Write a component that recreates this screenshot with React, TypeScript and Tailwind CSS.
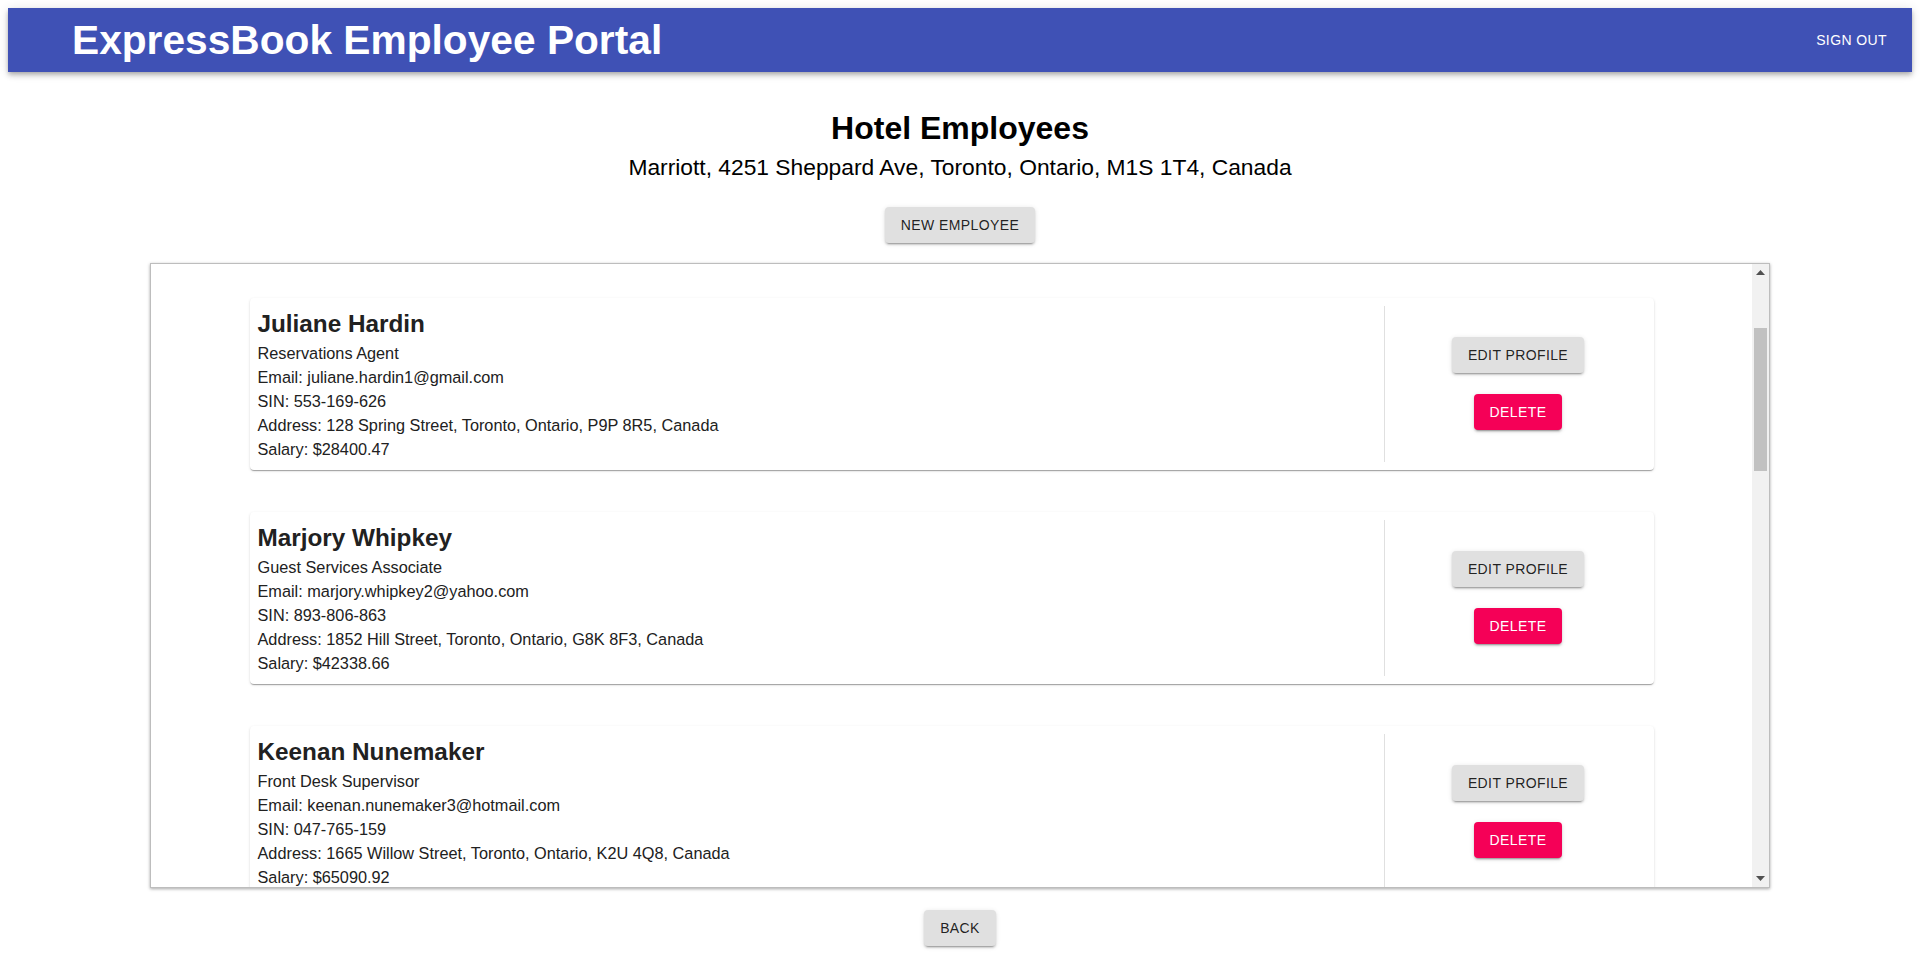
import React from "react";

type Emp = {
  name: string;
  role: string;
  email: string;
  sin: string;
  address: string;
  salary: string;
};

const employees: Emp[] = [
  {
    name: "Juliane Hardin",
    role: "Reservations Agent",
    email: "juliane.hardin1@gmail.com",
    sin: "553-169-626",
    address: "128 Spring Street, Toronto, Ontario, P9P 8R5, Canada",
    salary: "$28400.47",
  },
  {
    name: "Marjory Whipkey",
    role: "Guest Services Associate",
    email: "marjory.whipkey2@yahoo.com",
    sin: "893-806-863",
    address: "1852 Hill Street, Toronto, Ontario, G8K 8F3, Canada",
    salary: "$42338.66",
  },
  {
    name: "Keenan Nunemaker",
    role: "Front Desk Supervisor",
    email: "keenan.nunemaker3@hotmail.com",
    sin: "047-765-159",
    address: "1665 Willow Street, Toronto, Ontario, K2U 4Q8, Canada",
    salary: "$65090.92",
  },
];

const btnShadow =
  "shadow-[0px_3px_1px_-2px_rgba(0,0,0,0.2),0px_2px_2px_0px_rgba(0,0,0,0.14),0px_1px_5px_0px_rgba(0,0,0,0.12)]";

function GreyButton({ label }: { label: string }) {
  return (
    <button
      className={`h-9 px-4 rounded-[4px] bg-[#e0e0e0] text-[14px] leading-[36px] tracking-[0.4px] uppercase text-[rgba(0,0,0,0.87)] ${btnShadow}`}
    >
      {label}
    </button>
  );
}

function EmployeeCard({ e }: { e: Emp }) {
  return (
    <div className="w-[1404px] mx-auto shrink-0 flex bg-white rounded-[4px] shadow-[0px_2px_1px_-1px_rgba(0,0,0,0.2),0px_1px_1px_0px_rgba(0,0,0,0.14),0px_1px_3px_0px_rgba(0,0,0,0.12)]">
      <div className="flex-1 pl-2 pr-2 pt-2 pb-[9px] text-[#212121]">
        <div className="text-[24.3px] leading-[35px] font-bold">{e.name}</div>
        <div className="text-[16.3px] leading-[24px]">{e.role}</div>
        <div className="text-[16.3px] leading-[24px]">Email: {e.email}</div>
        <div className="text-[16.3px] leading-[24px]">SIN: {e.sin}</div>
        <div className="text-[16.3px] leading-[24px]">Address: {e.address}</div>
        <div className="text-[16.3px] leading-[24px]">Salary: {e.salary}</div>
      </div>
      <div className="w-px bg-[#e0e0e0] my-2" />
      <div className="w-[269px] pr-[2px] pb-[2px] flex flex-col items-center justify-center gap-[21px]">
        <GreyButton label="Edit Profile" />
        <button
          className={`h-9 px-4 rounded-[4px] bg-[#f50057] text-[14px] leading-[36px] tracking-[0.4px] uppercase text-white ${btnShadow}`}
        >
          Delete
        </button>
      </div>
    </div>
  );
}

export default function App() {
  return (
    <div className="min-h-[968px] bg-white p-2 font-['Liberation_Sans',Arial,sans-serif]">
      <header className="h-16 bg-[#3f51b5] flex items-center justify-between shadow-[0px_2px_4px_-1px_rgba(0,0,0,0.2),0px_4px_5px_0px_rgba(0,0,0,0.14),0px_1px_10px_0px_rgba(0,0,0,0.12)]">
        <div className="pl-[64px] text-white text-[40.7px] leading-[48px] font-bold">
          ExpressBook Employee Portal
        </div>
        <div className="pr-[25px] text-white text-[14px] tracking-[0.4px] uppercase">
          Sign Out
        </div>
      </header>

      <div className="flex flex-col items-center">
        <h1 className="mt-[38px] text-[32px] leading-[37px] font-bold text-black">
          Hotel Employees
        </h1>
        <div className="mt-[7px] text-[22.8px] leading-[26px] text-black">
          Marriott, 4251 Sheppard Ave, Toronto, Ontario, M1S 1T4, Canada
        </div>
        <div className="mt-[27px]">
          <GreyButton label="New Employee" />
        </div>

        <div className="mt-[20px] w-[1620px] h-[625px] flex border border-[#bdbdbd] bg-white shadow-[0_1px_3px_rgba(0,0,0,0.35)] overflow-hidden">
          <div className="flex-1 overflow-hidden flex flex-col gap-[42px] pt-[34px]">
            {employees.map((e) => (
              <EmployeeCard key={e.name} e={e} />
            ))}
          </div>
          <div className="w-[17px] bg-[#f1f1f1] flex flex-col items-center">
            <div className="h-[17px] flex items-center justify-center">
              <svg width="9" height="5" viewBox="0 0 9 5">
                <polygon points="0,5 9,5 4.5,0" fill="#505050" />
              </svg>
            </div>
            <div className="mt-[47px] w-[13px] h-[143px] bg-[#c1c1c1]" />
            <div className="flex-1" />
            <div className="h-[17px] flex items-center justify-center">
              <svg width="9" height="5" viewBox="0 0 9 5">
                <polygon points="0,0 9,0 4.5,5" fill="#505050" />
              </svg>
            </div>
          </div>
        </div>

        <div className="mt-[22px]">
          <GreyButton label="Back" />
        </div>
      </div>
    </div>
  );
}
